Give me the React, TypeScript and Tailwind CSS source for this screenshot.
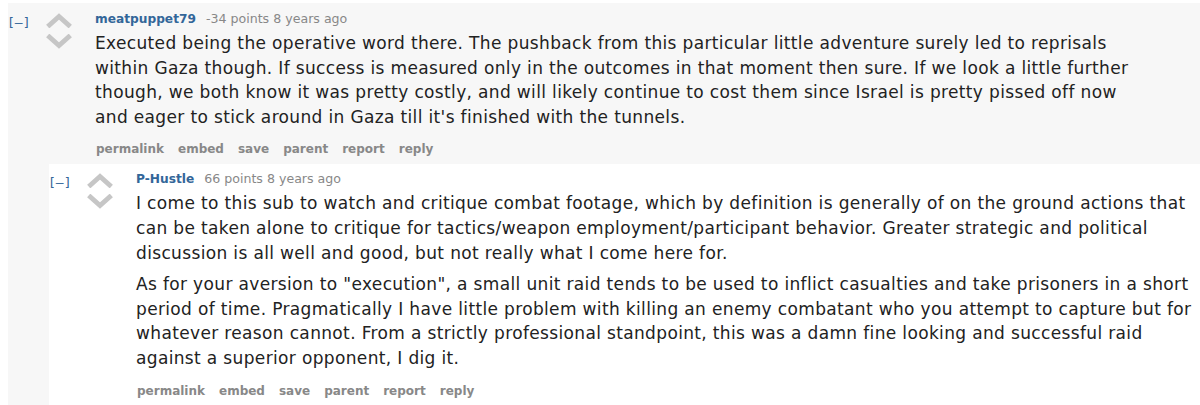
// reddit-style nested comment thread
import React from "react";

interface Comment {
  author: string;
  score: string;
  age: string;
  paragraphs: string[];
  children?: Comment[];
}

const ACTIONS = ["permalink", "embed", "save", "parent", "report", "reply"];

const THREAD: Comment = {
  author: "meatpuppet79",
  score: "-34 points",
  age: "8 years ago",
  paragraphs: [
    "Executed being the operative word there. The pushback from this particular little adventure surely led to reprisals within Gaza though. If success is measured only in the outcomes in that moment then sure. If we look a little further though, we both know it was pretty costly, and will likely continue to cost them since Israel is pretty pissed off now and eager to stick around in Gaza till it's finished with the tunnels.",
  ],
  children: [
    {
      author: "P-Hustle",
      score: "66 points",
      age: "8 years ago",
      paragraphs: [
        "I come to this sub to watch and critique combat footage, which by definition is generally of on the ground actions that can be taken alone to critique for tactics/weapon employment/participant behavior. Greater strategic and political discussion is all well and good, but not really what I come here for.",
        'As for your aversion to "execution", a small unit raid tends to be used to inflict casualties and take prisoners in a short period of time. Pragmatically I have little problem with killing an enemy combatant who you attempt to capture but for whatever reason cannot. From a strictly professional standpoint, this was a damn fine looking and successful raid against a superior opponent, I dig it.',
      ],
    },
  ],
};

function Arrow({ down }: { down?: boolean }) {
  return (
    <svg width="26" height="15" viewBox="0 0 26 15" className="block">
      <path
        d={down ? "M3.5 3 L13 11.5 L22.5 3" : "M3.5 12 L13 3.5 L22.5 12"}
        fill="none"
        stroke="#c6c6c6"
        strokeWidth="4.8"
        strokeLinecap="square"
      />
    </svg>
  );
}

function CommentNode({ c, nested }: { c: Comment; nested?: boolean }) {
  return (
    <div className={nested ? "bg-white pt-[6px]" : "bg-[#f7f7f7] pt-[7px]"}>
      <div className="flex">
        <span className="text-[13px] text-[#369] leading-none mt-[6px] w-[39px] shrink-0 -ml-[1px]" style={{ fontFamily: "'DejaVu Sans Mono', monospace" }}>
          [–]
        </span>
        <div className="flex flex-col gap-[6px] pt-[3px] w-[49px] shrink-0">
          <Arrow />
          <Arrow down />
        </div>
        <div className="flex-1 min-w-0">
          <div className="text-[12.6px] leading-[18px] text-[#888]">
            <span className="font-bold text-[#369] text-[12.2px] mr-[10px]">{c.author}</span>
            {c.score} {c.age}
          </div>
          <div className="max-w-[1060px] mt-[3px] text-[17px] tracking-[0.35px] leading-[24.6px] text-[#222]">
            {c.paragraphs.map((p, i) => (
              <p key={i} className={i > 0 ? "mt-[7px]" : ""}>
                {p}
              </p>
            ))}
          </div>
          <div className="flex gap-[14px] text-[12px] font-bold text-[#888] mt-[11px] pb-[6px] pl-[1px]">
            {ACTIONS.map((a) => (
              <span key={a}>{a}</span>
            ))}
          </div>
        </div>
      </div>
      {c.children && c.children.length > 0 && (
        <div className="pl-[41px]">
          {c.children.map((ch) => (
            <CommentNode key={ch.author} c={ch} nested />
          ))}
        </div>
      )}
    </div>
  );
}

export default function App() {
  return (
    <div className="w-[1200px] h-[405px] bg-white pl-[8px] pt-[3px] overflow-hidden" style={{ fontFamily: "'DejaVu Sans', Verdana, sans-serif" }}>
      <CommentNode c={THREAD} />
      <div className="bg-[#f7f7f7] w-[41px] h-[200px]" />
    </div>
  );
}
